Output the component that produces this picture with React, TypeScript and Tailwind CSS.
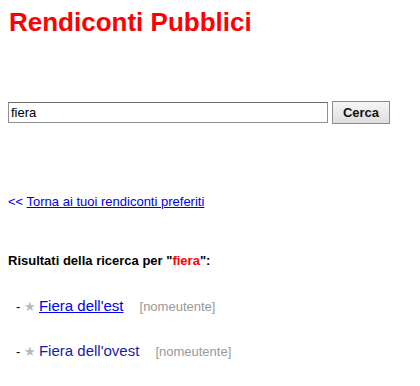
const items = [
  { name: "Fiera dell'est", underline: true },
  { name: "Fiera dell'ovest", underline: false },
];

export default function App() {
  return (
    <div className="min-h-[386px] w-[420px] bg-white p-2 font-['Liberation_Sans',Arial,sans-serif] text-black">
      <h1 className="text-[26px] leading-[28px] font-bold text-[#ff0000] pl-px">Rendiconti Pubblici</h1>

      <form className="mt-[65px] flex items-center gap-1" onSubmit={(e) => e.preventDefault()}>
        <input
          defaultValue="fiera"
          className="h-[21px] w-[320px] border border-[#8f8f8f] border-t-[#6e6e6e] bg-white px-[2px] text-[13px] outline-none"
        />
        <button
          type="submit"
          className="h-[23px] w-[58px] border border-[#8c8c8c] bg-gradient-to-b from-[#f6f6f6] to-[#dedede] text-[13px] font-bold text-[#111]"
        >
          Cerca
        </button>
      </form>

      <p className="mt-[70px] text-[13px] leading-[15px] text-[#0000ee]">
        &lt;&lt; <a href="#" className="underline">Torna ai tuoi rendiconti preferiti</a>
      </p>

      <p className="mt-[44px] text-[13px] leading-[15px] font-bold">
        Risultati della ricerca per "<span className="text-[#ff0000]">fiera</span>":
      </p>

      <ul className="mt-[29px] flex flex-col gap-[26px] pl-2">
        {items.map((it) => (
          <li key={it.name} className="flex items-baseline text-[13px] leading-[18px]">
            <span>-&nbsp;</span>
            <span className="text-[13px] text-[#b8b8b8]">★</span>
            <a
              href="#"
              className={`ml-[3px] text-[15px] ${it.underline ? "text-[#0000ee] underline" : "text-[#1a1aa6] no-underline"}`}
            >
              {it.name}
            </a>
            <span className="ml-4 text-[#999999]">[nomeutente]</span>
          </li>
        ))}
      </ul>
    </div>
  );
}
